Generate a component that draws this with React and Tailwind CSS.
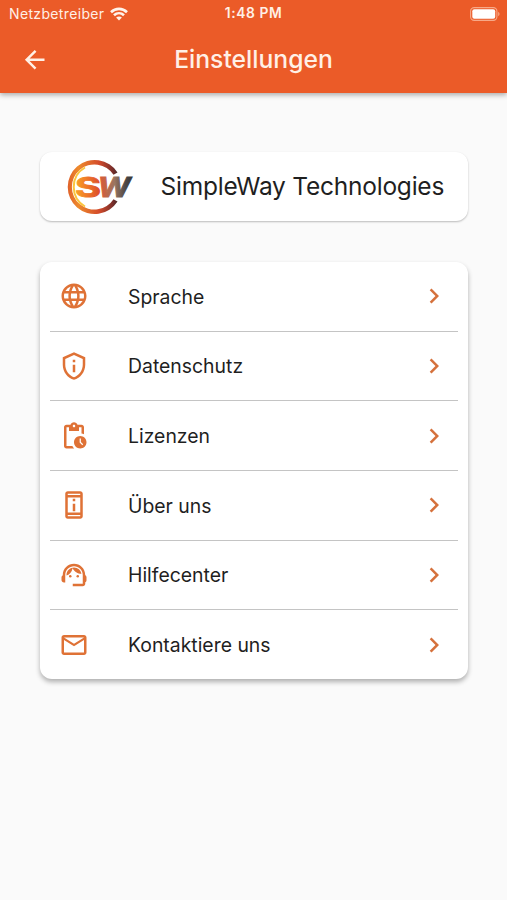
import React from 'react';
import {
    MdArrowBack, MdChevronRight, MdLanguage, MdMailOutline,
    MdOutlinePendingActions, MdOutlinePermDeviceInformation,
    MdOutlinePrivacyTip, MdSupportAgent
} from 'react-icons/md';

const items = [
    { label: 'Sprache', icon: MdLanguage },
    { label: 'Datenschutz', icon: MdOutlinePrivacyTip },
    { label: 'Lizenzen', icon: MdOutlinePendingActions },
    { label: 'Über uns', icon: MdOutlinePermDeviceInformation },
    { label: 'Hilfecenter', icon: MdSupportAgent },
    { label: 'Kontaktiere uns', icon: MdMailOutline },
];

const Wifi = () => (
    <svg width="18" height="14" viewBox="0 0 18 14" fill="none" stroke="#fff3ea" strokeWidth="2.6">
        <path d="M1 5.2C5.6.7 12.4.7 17 5.2" />
        <path d="M4 8.3c2.9-2.8 7.1-2.8 10 0" />
        <path d="M9 13.4 6.1 10.5c1.6-1.5 4.2-1.5 5.8 0z" fill="#fff3ea" stroke="none" />
    </svg>
);

const Battery = () => (
    <svg width="30" height="14" viewBox="0 0 30 14">
        <rect x=".6" y=".6" width="26.3" height="12.8" rx="3.6" fill="none" stroke="#f7a988" strokeWidth="1.1" />
        <rect x="2.3" y="2.3" width="22.9" height="9.4" rx="2" fill="#fff" />
        <path d="M28.2 4.8c1.8.8 1.8 3.6 0 4.4z" fill="#f7a988" />
    </svg>
);

const Logo = () => (
    <svg width="68" height="58" viewBox="0 0 68 58">
        <defs>
            <linearGradient id="ring" gradientUnits="userSpaceOnUse" x1="2" y1="0" x2="54" y2="0">
                <stop offset="0" stopColor="#e0622a" />
                <stop offset=".2" stopColor="#ee8a2c" />
                <stop offset=".6" stopColor="#d34b2b" />
                <stop offset=".85" stopColor="#7d2f2a" />
                <stop offset="1" stopColor="#33292b" />
            </linearGradient>
            <linearGradient id="letterS" gradientUnits="userSpaceOnUse" x1="9" y1="0" x2="35" y2="0">
                <stop offset="0" stopColor="#f9a526" />
                <stop offset=".5" stopColor="#ee7429" />
                <stop offset="1" stopColor="#d9482b" />
            </linearGradient>
            <linearGradient id="letterW" gradientUnits="userSpaceOnUse" x1="34" y1="0" x2="66" y2="0">
                <stop offset="0" stopColor="#dc5a35" />
                <stop offset=".45" stopColor="#9b7560" />
                <stop offset=".8" stopColor="#4d4846" />
                <stop offset="1" stopColor="#393737" />
            </linearGradient>
        </defs>
        <path
            d="M51.5 14.5A27 27 0 1 0 51.5 43.5L47.5 41.2A22.6 22.6 0 1 1 47.5 16.8z"
            fill="url(#ring)"
        />
        <path d="M19 9.5A22.5 22.5 0 0 0 19 48.5" fill="none" stroke="#fbc53f" strokeWidth="2" />
        <text
            x="9" y="38.5" fontSize="27" textLength="26" lengthAdjust="spacingAndGlyphs"
            className="font-[Inter,sans-serif] font-bold"
            fill="url(#letterS)" stroke="url(#letterS)" strokeWidth=".9"
        >S</text>
        <text
            x="31.5" y="38.5" fontSize="27" textLength="33" lengthAdjust="spacingAndGlyphs"
            className="font-[Inter,sans-serif] font-bold italic"
            fill="url(#letterW)" stroke="url(#letterW)" strokeWidth=".9"
        >W</text>
    </svg>
);

const App = () => {
    return (
        <div className="h-[900px] w-full bg-[#fafafa] font-[Inter,sans-serif] text-[#1f1f1f]">
            {/* Status bar + app bar */}
            <header className="relative h-[93px] bg-[#eb5b28] text-[#fff0e6] shadow-[0_2px_5px_rgba(0,0,0,0.32)]">
                <div className="grid h-[25px] grid-cols-3 items-center pt-[2px] pr-[7px] pl-[7px] text-[14px]">
                    <div className="flex items-center gap-[6px] pl-[2px] whitespace-nowrap tracking-[0.35px]">
                        Netzbetreiber <Wifi />
                    </div>
                    <div className="text-center text-[13.8px] font-semibold tracking-[0.6px]">1:48 PM</div>
                    <div className="flex justify-end"><Battery /></div>
                </div>
                <div className="grid h-[69px] grid-cols-[70px_1fr_70px] items-center">
                    <MdArrowBack size={29.4} className="ml-[20px]" />
                    <h1 className="text-center text-[24.7px] font-medium">Einstellungen</h1>
                </div>
            </header>

            <main className="px-[39.5px] pt-[59px]">
                <div className="flex h-[69px] items-center rounded-[12px] bg-white pl-[26px] shadow-[0_1px_2px_rgba(0,0,0,0.26)]">
                    <Logo />
                    <span className="ml-[27px] text-[24.5px] tracking-[-0.23px] whitespace-nowrap">SimpleWay Technologies</span>
                </div>

                {/* Settings list */}
                <div className="mt-[41px] rounded-[12px] bg-white px-[10px] shadow-[0_3px_5px_rgba(0,0,0,0.3)]">
                    {items.map(({ label, icon: Icon }) => (
                        <div
                            key={label}
                            className="flex h-[69.65px] items-center border-b border-[#c4c4c4] pr-[9px] pl-[9px] last:h-[69px] last:border-b-0"
                        >
                            <Icon size={30} className="text-[#df7236]" />
                            <span className="ml-[39.5px] flex-1 pt-[2px] text-[19.4px]">{label}</span>
                            <MdChevronRight size={30} className="text-[#d5713c]" />
                        </div>
                    ))}
                </div>
            </main>
        </div>
    );
};

export default App;
